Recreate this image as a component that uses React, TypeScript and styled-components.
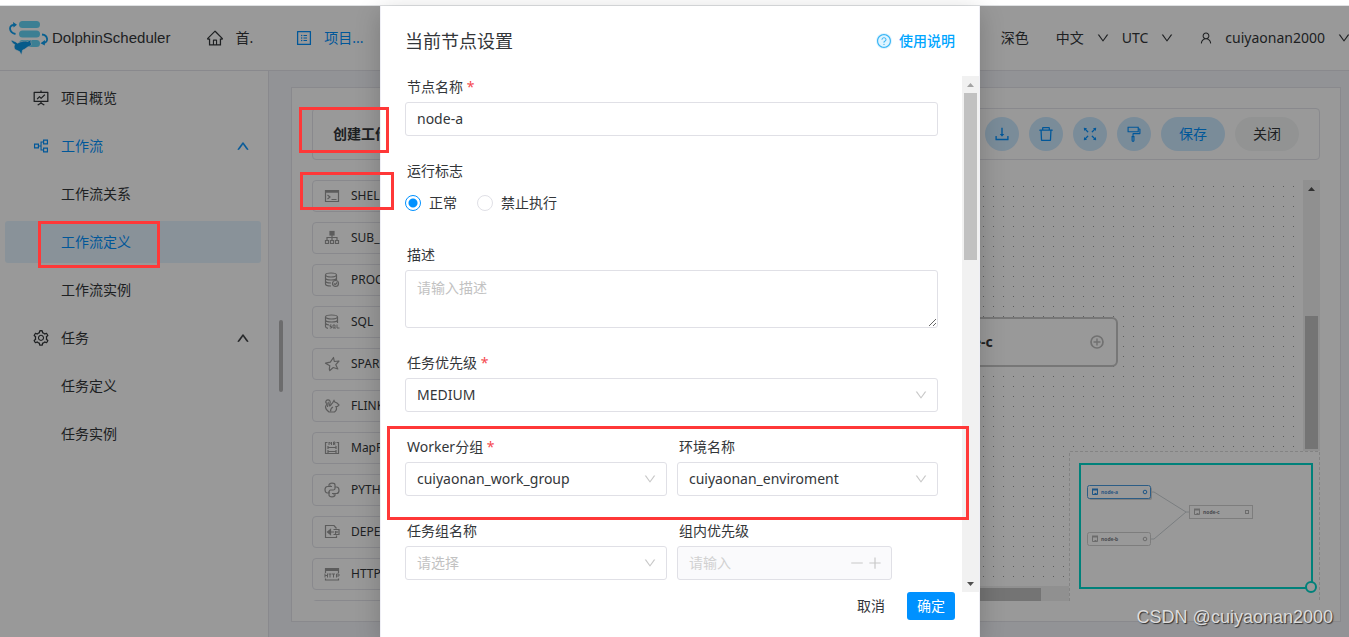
import React from 'react';
import styled, { createGlobalStyle } from 'styled-components';
import {
  AiOutlineHome,
  AiOutlineProfile,
  AiOutlineFundProjectionScreen,
  AiOutlinePartition,
  AiOutlineSetting,
  AiOutlineUser,
  AiOutlineDown,
  AiOutlineUp,
  AiOutlineDownload,
  AiOutlineDelete,
  AiOutlineFullscreen,
  AiOutlineFormatPainter,
  AiOutlineQuestionCircle,
  AiOutlineMinus,
  AiOutlinePlus,
} from 'react-icons/ai';

const PRIMARY = '#0091ff';
const TEXT = '#333639';
const LINE = '#e4e5eb';

const GlobalStyle = createGlobalStyle`
  * { box-sizing: border-box; }
  body {
    margin: 0;
    background: #fff;
    color: ${TEXT};
    font: 14px/22px "Noto Sans", "Noto Sans CJK SC", sans-serif;
    overflow: hidden;
  }
  button, input, select, textarea { font: inherit; color: inherit; margin: 0; }
  a { color: inherit; text-decoration: none; }
  svg { display: block; flex: none; }
`;

/* ---------- page shell ---------- */

const Page = styled.div`
  position: relative;
  display: flex;
  flex-direction: column;
  height: 100vh;
  overflow: hidden;
`;

const TopEdge = styled.div`
  flex: none;
  height: 6px;
  border-bottom: 1px solid #dfe1e3;
`;

const Header = styled.header`
  flex: none;
  display: flex;
  align-items: center;
  height: 65px;
  padding-left: 9px;
  border-bottom: 1px solid ${LINE};
`;

const Brand = styled.a`
  display: flex;
  align-items: center;
  gap: 3px;
  font: 15px/22px "Liberation Sans", Arial, sans-serif;
`;

const Nav = styled.nav`
  display: flex;
  gap: 42px;
  margin-left: 36px;
`;

const NavLink = styled.a<{ $active?: boolean }>`
  display: flex;
  align-items: center;
  gap: 11px;
  white-space: nowrap;
  color: ${(p) => (p.$active ? PRIMARY : TEXT)};
`;

const HeaderTools = styled.div`
  display: flex;
  gap: 12px;
  margin-left: auto;
  margin-right: -2px;
`;

const ToolButton = styled.button`
  display: flex;
  align-items: center;
  gap: 12px;
  padding: 0;
  border: 0;
  background: none;
`;

const ThemeButton = styled(ToolButton)`
  margin-right: 15px;
`;

const UserButton = styled(ToolButton)`
  margin-left: 13px;
`;

const Body = styled.div`
  flex: 1;
  display: flex;
  min-height: 0;
`;

const Sidebar = styled.aside`
  flex: none;
  width: 269px;
  padding: 0 7px 0 5px;
  border-right: 1px solid ${LINE};
`;

const Menu = styled.ul`
  list-style: none;
  margin: 0;
  padding: 0;
`;

const MenuLink = styled.a<{ $tone?: 'open' | 'current'; $nested?: boolean }>`
  display: flex;
  align-items: center;
  gap: 11px;
  height: 42px;
  margin-top: 6px;
  padding: 0 11px 0 ${(p) => (p.$nested ? 56 : 27)}px;
  border-radius: 3px;
  color: ${(p) => (p.$tone ? PRIMARY : TEXT)};
  background: ${(p) => (p.$tone === 'current' ? '#e5f4ff' : 'transparent')};
`;

const MenuText = styled.span`
  flex: 1;
`;

const Content = styled.main`
  position: relative;
  flex: 1;
  display: flex;
  min-width: 0;
  padding: 16px 8px 15px 22px;
  background: #f4f5fa;
`;

const SiderScroll = styled.div`
  position: absolute;
  left: 10px;
  top: 249px;
  width: 4px;
  height: 72px;
  border-radius: 2px;
  background: #b4b4b6;
`;

const Card = styled.section`
  flex: 1;
  display: flex;
  flex-direction: column;
  gap: 20px;
  min-width: 0;
  padding: 20px;
  border: 1px solid ${LINE};
  background: #fff;
`;

const Toolbar = styled.div`
  flex: none;
  display: flex;
  align-items: center;
  gap: 10px;
  height: 52px;
  padding: 0 20px;
  border: 1px solid ${LINE};
  border-radius: 4px;
`;

const ToolbarTitle = styled.h2`
  flex: 1;
  margin: 0;
  font-size: 14px;
  line-height: 22px;
  font-weight: 700;
`;

const RoundButton = styled.button`
  display: flex;
  align-items: center;
  justify-content: center;
  width: 34px;
  height: 34px;
  padding: 0;
  border: 0;
  border-radius: 17px;
  color: ${PRIMARY};
  background: #cce9ff;
`;

const PillButton = styled(RoundButton)<{ $plain?: boolean }>`
  width: 64px;
  color: ${(p) => (p.$plain ? TEXT : PRIMARY)};
  background: ${(p) => (p.$plain ? '#f4f6f6' : '#cce9ff')};
`;

const Workspace = styled.div`
  flex: 1;
  display: flex;
  gap: 20px;
  min-height: 0;
`;

const TaskList = styled.ul`
  flex: none;
  display: flex;
  flex-direction: column;
  gap: 10px;
  width: 180px;
  margin: 0;
  padding: 0;
  list-style: none;
  overflow: hidden;
`;

const TaskItem = styled.li`
  flex: none;
  display: flex;
  align-items: center;
  gap: 11px;
  height: 32px;
  padding: 0 11px;
  border: 1px solid ${LINE};
  border-radius: 4px;
  font-size: 12px;
  color: ${TEXT};

  svg { color: #9a9a9a; }
`;

/* ---------- canvas ---------- */

const Canvas = styled.div`
  position: relative;
  flex: 1;
  display: grid;
  grid-template: minmax(0, 1fr) 15px / minmax(0, 1fr) 17px;
  min-width: 0;
  overflow: hidden;
`;

const Grid = styled.svg`
  width: 100%;
  height: 100%;
`;

const VTrack = styled.div`
  display: flex;
  flex-direction: column;
  align-items: center;
  width: 17px;
  padding: 4px 0;
  background: #f1f1f1;
`;

const VThumb = styled.div<{ $top: number; $size: number }>`
  width: 13px;
  height: ${(p) => p.$size}px;
  margin-top: ${(p) => p.$top}px;
  background: #c1c1c1;
`;

const DownArrowSlot = styled.div`
  margin-top: auto;
`;

const HTrack = styled.div`
  grid-column: 1 / 3;
  padding-top: 2px;
  background: #f1f1f1;
`;

const HThumb = styled.div`
  width: calc(100% - 279px);
  height: 13px;
  background: #c1c1c1;
`;

const DagNode = styled.div`
  position: absolute;
  right: 202px;
  top: 137px;
  display: flex;
  align-items: center;
  gap: 12px;
  width: 220px;
  height: 50px;
  padding: 0 12px;
  border: 2px solid #c6c6c6;
  border-radius: 6px;
  background: #fff;
  color: #909090;
`;

const DagLabel = styled.strong`
  flex: 1;
  padding-left: 6px;
  font-size: 14px;
  color: ${TEXT};
`;

const MiniMap = styled.svg`
  position: absolute;
  right: 0;
  bottom: 0;
  width: 251px;
  height: 150px;
  background: #fff;
`;

/* ---------- dialog ---------- */

const Mask = styled.div`
  position: absolute;
  inset: 6px 0 0;
  display: flex;
  justify-content: center;
  padding-left: 11px;
  background: rgba(0, 0, 0, 0.4);
`;

const Dialog = styled.div`
  position: relative;
  display: flex;
  flex-direction: column;
  width: 600px;
  border: solid #efeff5;
  border-width: 0 1px;
  background: #fff;
  box-shadow: 0 6px 24px rgba(0, 0, 0, 0.2);
`;

const DialogHead = styled.div`
  flex: none;
  display: flex;
  align-items: center;
  justify-content: space-between;
  height: 70px;
  padding: 0 24px;
`;

const DialogTitle = styled.h1`
  margin: 0;
  font-size: 18px;
  line-height: 28px;
  font-weight: 400;
`;

const HelpLink = styled.a`
  display: flex;
  align-items: center;
  gap: 7px;
  font-weight: 500;
  color: #00a6ff;

  svg { border-radius: 50%; background: #e0f4ff; color: #3bb6f5; }
`;

const DialogBody = styled.div`
  flex: 1;
  display: flex;
  min-height: 0;
`;

const Form = styled.form`
  flex: 1;
  display: grid;
  grid-template-columns: 262px 1fr;
  align-content: start;
  gap: 24px 10px;
  padding: 0 24px;
  overflow: hidden;
`;

const Field = styled.div<{ $wide?: boolean }>`
  grid-column: ${(p) => (p.$wide ? '1 / 3' : 'auto')};
  min-width: 0;
`;

const FieldLabel = styled.label`
  display: block;
  height: 26px;
  padding-left: 2px;
`;

const Required = styled.span`
  color: #f5494f;
`;

const RadioSet = styled.fieldset`
  grid-column: 1 / 3;
  margin: 0;
  padding: 0;
  border: 0;
`;

const RadioLegend = styled.legend`
  height: 26px;
  padding: 0 0 0 2px;
`;

const RadioRow = styled.div`
  display: flex;
  align-items: center;
  gap: 20px;
  height: 34px;
`;

const RadioLabel = styled.label`
  display: flex;
  align-items: center;
  gap: 8px;
`;

const Radio = styled.input`
  appearance: none;
  width: 16px;
  height: 16px;
  border: 1px solid #e0e0e6;
  border-radius: 50%;

  &:checked {
    border-color: ${PRIMARY};
    background: radial-gradient(circle, ${PRIMARY} 4px, #fff 5px);
  }
`;

const TextBox = styled.input`
  display: block;
  width: 100%;
  height: 34px;
  padding: 0 11px 2px;
  border: 1px solid #e0e0e6;
  border-radius: 3px;
  background: #fff;
`;

const TextArea = styled.textarea`
  display: block;
  width: 100%;
  height: 58px;
  padding: 6px 11px;
  border: 1px solid #e0e0e6;
  border-radius: 3px;
  resize: vertical;

  &::placeholder { color: #c2c2c2; }
`;

const SelectWrap = styled.div`
  position: relative;

  svg { position: absolute; right: 10px; top: 10px; color: #c8c8c8; pointer-events: none; }
`;

const Select = styled.select<{ $empty?: boolean }>`
  appearance: none;
  display: block;
  width: 100%;
  height: 34px;
  padding: 0 30px 0 11px;
  border: 1px solid #e0e0e6;
  border-radius: 3px;
  background: #fff;
  color: ${(p) => (p.$empty ? '#c2c2c2' : TEXT)};
`;

const NumberWrap = styled.div`
  display: flex;
  align-items: center;
  width: 215px;
  height: 34px;
  padding: 0 7px 0 11px;
  border: 1px solid #e0e0e6;
  border-radius: 3px;
  background: #fafafc;
  color: #c8c8c8;
`;

const NumberInput = styled.input`
  flex: 1;
  min-width: 0;
  padding: 0;
  border: 0;
  background: none;

  &::placeholder { color: #d1d1d1; }
`;

const StepButton = styled.button`
  padding: 0;
  width: 18px;
  border: 0;
  background: none;
  display: flex;
  justify-content: center;
`;

const DialogFoot = styled.div`
  flex: none;
  display: flex;
  justify-content: flex-end;
  gap: 12px;
  height: 45px;
  padding: 0 24px;
`;

const FootButton = styled.button<{ $primary?: boolean }>`
  height: 28px;
  padding: 0 10px;
  border: 0;
  border-radius: 3px;
  color: ${(p) => (p.$primary ? '#fff' : TEXT)};
  background: ${(p) => (p.$primary ? PRIMARY : 'transparent')};
`;

/* ---------- annotations ---------- */

const Marker = styled.div<{ $x: number; $y: number; $w: number; $h: number }>`
  position: absolute;
  left: ${(p) => p.$x}px;
  top: ${(p) => p.$y}px;
  width: ${(p) => p.$w}px;
  height: ${(p) => p.$h}px;
  border: 3px solid #ff3838;
  pointer-events: none;
`;

const Watermark = styled.div`
  position: absolute;
  right: 16px;
  bottom: 8px;
  font: 18px/24px "Liberation Sans", Arial, sans-serif;
  color: #dcdcdc;
  text-shadow: 1px 1px 1px #333;
`;

/* ---------- drawings ---------- */

const Logo = () => (
  <svg width="40" height="35" viewBox="0 0 40 35">
    <g fill="#64d4f5">
      <rect x="10" y="0" width="21" height="7" rx="3.5" />
      <rect x="10" y="9.5" width="21" height="7" rx="3.5" />
      <rect x="10" y="19" width="21" height="7" rx="3.5" />
    </g>
    <g fill="none" stroke="#10a0f0" strokeWidth="1.8">
      <path d="M6.500 13C-.5 11.500-.5 4 5 4" />
      <path d="M33 13.500c6 .5 7 8 1.500 8.500" />
    </g>
    <path fill="#10a0f0" d="M4 1l4 2.800L4.500 6.500zM36 19l-4.500 3.200 4.300 2.300z" />
    <path
      fill="#0a98e6"
      stroke="#fff"
      strokeWidth="0.6"
      d="M2 19c2.200 1 4 1 6.500 3.200 4-2.200 7.500-2.500 10.500-1.700 1-1 1.800-1.400 3.500-1.500-.8 1-.9 1.800-.6 2.700 1 1.300.7 2.600-.6 3.300-1.800.3-2.800 1-4 2-1.300 1.200-2.500 1.600-3.800 2.200L12.500 34l-2-3.500-4.500-2c-1.200-2-1-3.500-.2-5C3.800 22.500 2.500 21 2 19z"
    />
  </svg>
);

const Svg16 = ({ children }: { children: React.ReactNode }) => (
  <svg width="16" height="16" viewBox="0 0 16 16" fill="none" stroke="currentColor" strokeWidth="1.2">
    {children}
  </svg>
);

const ShellIcon = () => (
  <Svg16>
    <path d="M1.500 2.500h13v11h-13z" />
    <path d="M1.500 3.500h13" strokeWidth="2.5" />
    <path d="M3.500 7l2.500 2-2.500 2M7.500 11.500h5" />
  </Svg16>
);

const TreeIcon = () => (
  <Svg16>
    <rect x="6" y="1.5" width="4" height="3.5" fill="currentColor" />
    <path d="M8 5v5M3 10V7.500h10V10" />
    <path d="M1.500 10.500h3v3h-3zM6.500 10.500h3v3h-3zM11.500 10.500h3v3h-3z" />
  </Svg16>
);

const ProcedureIcon = () => (
  <Svg16>
    <ellipse cx="7" cy="3" rx="5.5" ry="2" />
    <path d="M1.500 3v9c0 1.200 2.300 2 5.500 2M12.500 3v5M1.500 6c0 1.200 2.300 2 5.500 2s5.500-.8 5.500-2M1.500 9c0 1.200 2.300 2 5.500 2" />
    <circle cx="11.5" cy="11.5" r="3" />
    <path d="M10 11.500l1.200 1.200 2-2.200" />
  </Svg16>
);

const SqlIcon = () => (
  <Svg16>
    <ellipse cx="7.5" cy="3" rx="6" ry="2" />
    <path d="M1.500 3v9.500c0 1 1 1.500 2.500 1.800M13.500 3v6M1.500 6c0 1.200 2.500 2 6 2s6-.8 6-2M1.500 9c0 1 1.500 1.700 3.500 2" />
    <path d="M7.500 11H6v1.500h1.500V14H5.800M9 11h2v3H9zM10.500 13.500l1 1M13 10.500V14h2.500" strokeWidth="1" />
  </Svg16>
);

const SparkIcon = () => (
  <Svg16>
    <path
      strokeLinejoin="round"
      d="M9.500 1.500l.8 4 4.700-.5-3.200 3.700 2 4.300-4.500-1.500-3.500 3-.5-1.500.5-3.300-4.300-2.500 4.800-1z"
    />
  </Svg16>
);

const FlinkIcon = () => (
  <Svg16>
    <path d="M5 14c-2-1.500-3.500-3-3.500-5C1.500 7.500 3 7 3 5.500 2 5 1.500 4 2 3c1-1.500 3-1.500 4 0 1 1.700-1 3.500-.5 5C7 8 7 6 8.500 5L10 2.500l.8 1.500L13 5l2 2-1.500 1.500H12c1 2 .5 4-1.500 5.500z" />
    <path d="M6.500 13.500c0-2 .5-3.500 2.500-4.500M4 4c1 1-.5 3-.5 5" />
  </Svg16>
);

const MrIcon = () => (
  <Svg16>
    <path d="M3.500 2.500h-2v11h13v-11h-2M4 7.500h8M4 11.500h8M4 6v3M12 6v3M4 10v3M12 10v3" />
    <path d="M5 5V2l1.300 1.500L7.500 2v3M9.500 5V2H11v1.500H9.500l2 1.500" strokeWidth="1" />
  </Svg16>
);

const PythonIcon = () => (
  <Svg16>
    <path d="M8 4.500H5V3c0-1.200 1-1.800 3-1.800s3 .6 3 1.800v3.500c0 1-.8 1.500-1.800 1.500H6.500C5.300 8 5 9 5 11H3.500C2 11 1 10 1 7.800S2 4.500 3.500 4.500z" />
    <path d="M8 11.500h3V13c0 1.200-1 1.800-3 1.800S5 14.200 5 13V9.500M11 5h1.500C14 5 15 6 15 8.200s-1 3.300-2.500 3.300H8M6.500 2.800v.7M9.500 12.500v.7" />
  </Svg16>
);

const DependentIcon = () => (
  <Svg16>
    <path d="M12.500 4.500L10 1.500H1.500v12h11v-2" />
    <path d="M4 8h6M6.500 5.500v5L3.500 8z" fill="currentColor" />
    <path d="M9.500 5.500h5.500v5H9.500M11.500 7v4M13 7v2" />
  </Svg16>
);

const HttpIcon = () => (
  <Svg16>
    <path d="M1.500 7V2.500h13V7M1.500 12.500v1.500h13v-1.500" />
    <path d="M1.500 3.500h13" strokeWidth="3" />
    <path d="M1 7.500v4M3.500 7.500v4M1 9.500h2.500M4.500 8h3M6 8v3.500M8 8h3M9.500 8v3.500M12.500 11.500V8h2.500v2h-2.500" strokeWidth="1" />
  </Svg16>
);

const ScrollArrow = ({ down, color }: { down?: boolean; color: string }) => (
  <svg width="9" height="9" viewBox="0 0 9 9">
    <path d={down ? 'M1 3h7L4.500 7z' : 'M1 7h7L4.500 3z'} fill={color} />
  </svg>
);

const PlusCircle = () => (
  <svg width="14" height="14" viewBox="0 0 14 14" fill="none" stroke="#bcbcbc">
    <circle cx="7" cy="7" r="6" strokeWidth="1.7" />
    <path d="M7 3.500v7M3.500 7h7" strokeWidth="1.4" />
  </svg>
);

interface MiniNodeProps {
  x: number;
  y: number;
  name: string;
  active?: boolean;
  square?: boolean;
}

const MiniNode = ({ x, y, name, active, square }: MiniNodeProps) => {
  const color = active ? '#4a9be0' : '#d0d0d0';
  const glyph = active ? '#2f8ee0' : '#b4b4b4';
  return (
    <g transform={`translate(${x} ${y})`}>
      {active && <rect x="2" y="2" width="63" height="13" rx="2" fill="#d4d4d4" />}
      <rect x="0.5" y="0.5" width="63" height="13" rx={square ? 0 : 2} fill="#fff" stroke={color} />
      <path d="M5.500 4.500h5v5h-5z" fill="none" stroke={glyph} />
      <path d="M5 4.500h6" stroke={glyph} strokeWidth="2" />
      <path d="M7.500 8.500h2" stroke={glyph} />
      <text x="14" y="9" fontSize="5" fontWeight="700" fill={active ? '#4a90d8' : '#7c8088'}>{name}</text>
      {square
        ? <rect x="56.5" y="5.5" width="3" height="3" fill="none" stroke={glyph} />
        : <circle cx="58" cy="7" r="1.8" fill="none" stroke={glyph} />}
    </g>
  );
};

const tasks: [string, React.FC][] = [
  ['SHELL', ShellIcon],
  ['SUB_PROCESS', TreeIcon],
  ['PROCEDURE', ProcedureIcon],
  ['SQL', SqlIcon],
  ['SPARK', SparkIcon],
  ['FLINK', FlinkIcon],
  ['MapReduce', MrIcon],
  ['PYTHON', PythonIcon],
  ['DEPENDENT', DependentIcon],
  ['HTTP', HttpIcon],
];

interface SelectFieldProps {
  id: string;
  label: string;
  value: string;
  required?: boolean;
  wide?: boolean;
  empty?: boolean;
}

const SelectField = ({ id, label, value, required, wide, empty }: SelectFieldProps) => (
  <Field $wide={wide}>
    <FieldLabel htmlFor={id}>
      {label} {required && <Required>*</Required>}
    </FieldLabel>
    <SelectWrap>
      <Select id={id} $empty={empty} defaultValue={value}>
        <option>{value}</option>
      </Select>
      <AiOutlineDown size={14} />
    </SelectWrap>
  </Field>
);

export default function App() {
  return (
    <Page>
      <GlobalStyle />
      <TopEdge />
      <Header>
        <Brand href="#"><Logo />DolphinScheduler</Brand>
        <Nav>
          <NavLink href="#"><AiOutlineHome size={18} />首.</NavLink>
          <NavLink href="#" $active><AiOutlineProfile size={18} />项目...</NavLink>
        </Nav>
        <HeaderTools>
          <ThemeButton>深色</ThemeButton>
          <ToolButton>中文<AiOutlineDown size={14} /></ToolButton>
          <ToolButton>UTC<AiOutlineDown size={14} /></ToolButton>
          <UserButton><AiOutlineUser size={14} />cuiyaonan2000<AiOutlineDown size={14} /></UserButton>
        </HeaderTools>
      </Header>

      <Body>
        <Sidebar>
          <Menu>
            <li><MenuLink href="#"><AiOutlineFundProjectionScreen size={18} /><MenuText>项目概览</MenuText></MenuLink></li>
            <li>
              <MenuLink href="#" $tone="open">
                <AiOutlinePartition size={18} /><MenuText>工作流</MenuText><AiOutlineUp size={14} strokeWidth={40} />
              </MenuLink>
              <Menu>
                <li><MenuLink href="#" $nested>工作流关系</MenuLink></li>
                <li><MenuLink href="#" $nested $tone="current">工作流定义</MenuLink></li>
                <li><MenuLink href="#" $nested>工作流实例</MenuLink></li>
              </Menu>
            </li>
            <li>
              <MenuLink href="#">
                <AiOutlineSetting size={18} /><MenuText>任务</MenuText><AiOutlineUp size={14} strokeWidth={40} />
              </MenuLink>
              <Menu>
                <li><MenuLink href="#" $nested>任务定义</MenuLink></li>
                <li><MenuLink href="#" $nested>任务实例</MenuLink></li>
              </Menu>
            </li>
          </Menu>
        </Sidebar>

        <Content>
          <SiderScroll />
          <Card>
            <Toolbar>
              <ToolbarTitle>创建工作流</ToolbarTitle>
              <RoundButton aria-label="下载"><AiOutlineDownload size={18} /></RoundButton>
              <RoundButton aria-label="删除"><AiOutlineDelete size={18} /></RoundButton>
              <RoundButton aria-label="全屏"><AiOutlineFullscreen size={18} /></RoundButton>
              <RoundButton aria-label="格式化"><AiOutlineFormatPainter size={18} /></RoundButton>
              <PillButton>保存</PillButton>
              <PillButton $plain>关闭</PillButton>
            </Toolbar>
            <Workspace>
              <TaskList>
                {tasks.map(([name, Icon]) => (
                  <TaskItem key={name}><Icon />{name}</TaskItem>
                ))}
                <TaskItem aria-hidden />
              </TaskList>
              <Canvas>
                <Grid>
                  <defs>
                    <pattern id="dots" x="1" y="6" width="10" height="10" patternUnits="userSpaceOnUse">
                      <rect width="1" height="1" fill="#9a9a9a" />
                    </pattern>
                  </defs>
                  <rect width="100%" height="100%" fill="url(#dots)" />
                </Grid>
                <VTrack>
                  <ScrollArrow color="#505050" />
                  <VThumb $top={123} $size={133} />
                </VTrack>
                <HTrack><HThumb /></HTrack>
                <DagNode>
                  <ShellIcon />
                  <DagLabel>node-c</DagLabel>
                  <PlusCircle />
                </DagNode>
                <MiniMap viewBox="0 0 251 150">
                  <path d="M0.500 150V0.500H250.500V150" fill="none" stroke="#dadada" strokeDasharray="3 2" />
                  <path d="M82 41h3l32 20h4M82 88h3l32-27" fill="none" stroke="#ccd2d6" />
                  <MiniNode x={18} y={34} name="node-a" active />
                  <MiniNode x={18} y={81} name="node-b" />
                  <MiniNode x={120} y={54} name="node-c" square />
                  <rect x="11" y="13" width="232" height="124" fill="none" stroke="#00d8cc" strokeWidth="2" />
                  <circle cx="242" cy="136" r="5" fill="#fff" stroke="#00d8cc" strokeWidth="2" />
                </MiniMap>
              </Canvas>
            </Workspace>
          </Card>
        </Content>
      </Body>

      <Mask>
        <Dialog role="dialog" aria-labelledby="dialog-title">
          <DialogHead>
            <DialogTitle id="dialog-title">当前节点设置</DialogTitle>
            <HelpLink href="#"><AiOutlineQuestionCircle size={16} />使用说明</HelpLink>
          </DialogHead>
          <DialogBody>
            <Form>
              <Field $wide>
                <FieldLabel htmlFor="name">节点名称 <Required>*</Required></FieldLabel>
                <TextBox id="name" defaultValue="node-a" />
              </Field>
              <RadioSet>
                <RadioLegend>运行标志</RadioLegend>
                <RadioRow>
                  <RadioLabel><Radio type="radio" name="flag" defaultChecked />正常</RadioLabel>
                  <RadioLabel><Radio type="radio" name="flag" />禁止执行</RadioLabel>
                </RadioRow>
              </RadioSet>
              <Field $wide>
                <FieldLabel htmlFor="desc">描述</FieldLabel>
                <TextArea id="desc" placeholder="请输入描述" />
              </Field>
              <SelectField id="priority" label="任务优先级" value="MEDIUM" required wide />
              <SelectField id="worker" label="Worker分组" value="cuiyaonan_work_group" required />
              <SelectField id="env" label="环境名称" value="cuiyaonan_enviroment" />
              <SelectField id="group" label="任务组名称" value="请选择" empty />
              <Field>
                <FieldLabel htmlFor="inner">组内优先级</FieldLabel>
                <NumberWrap>
                  <NumberInput id="inner" placeholder="请输入" disabled />
                  <StepButton type="button" aria-label="减" disabled><AiOutlineMinus size={16} /></StepButton>
                  <StepButton type="button" aria-label="加" disabled><AiOutlinePlus size={16} /></StepButton>
                </NumberWrap>
              </Field>
            </Form>
            <VTrack>
              <ScrollArrow color="#a3a3a3" />
              <VThumb $top={4} $size={167} />
              <DownArrowSlot><ScrollArrow down color="#505050" /></DownArrowSlot>
            </VTrack>
          </DialogBody>
          <DialogFoot>
            <FootButton>取消</FootButton>
            <FootButton $primary>确定</FootButton>
          </DialogFoot>
          <Marker $x={6} $y={420} $w={582} $h={94} />
        </Dialog>
      </Mask>

      <Marker $x={299} $y={107} $w={90} $h={46} />
      <Marker $x={300} $y={172} $w={94} $h={38} />
      <Marker $x={38} $y={221} $w={122} $h={47} />
      <Watermark>CSDN @cuiyaonan2000</Watermark>
    </Page>
  );
}
